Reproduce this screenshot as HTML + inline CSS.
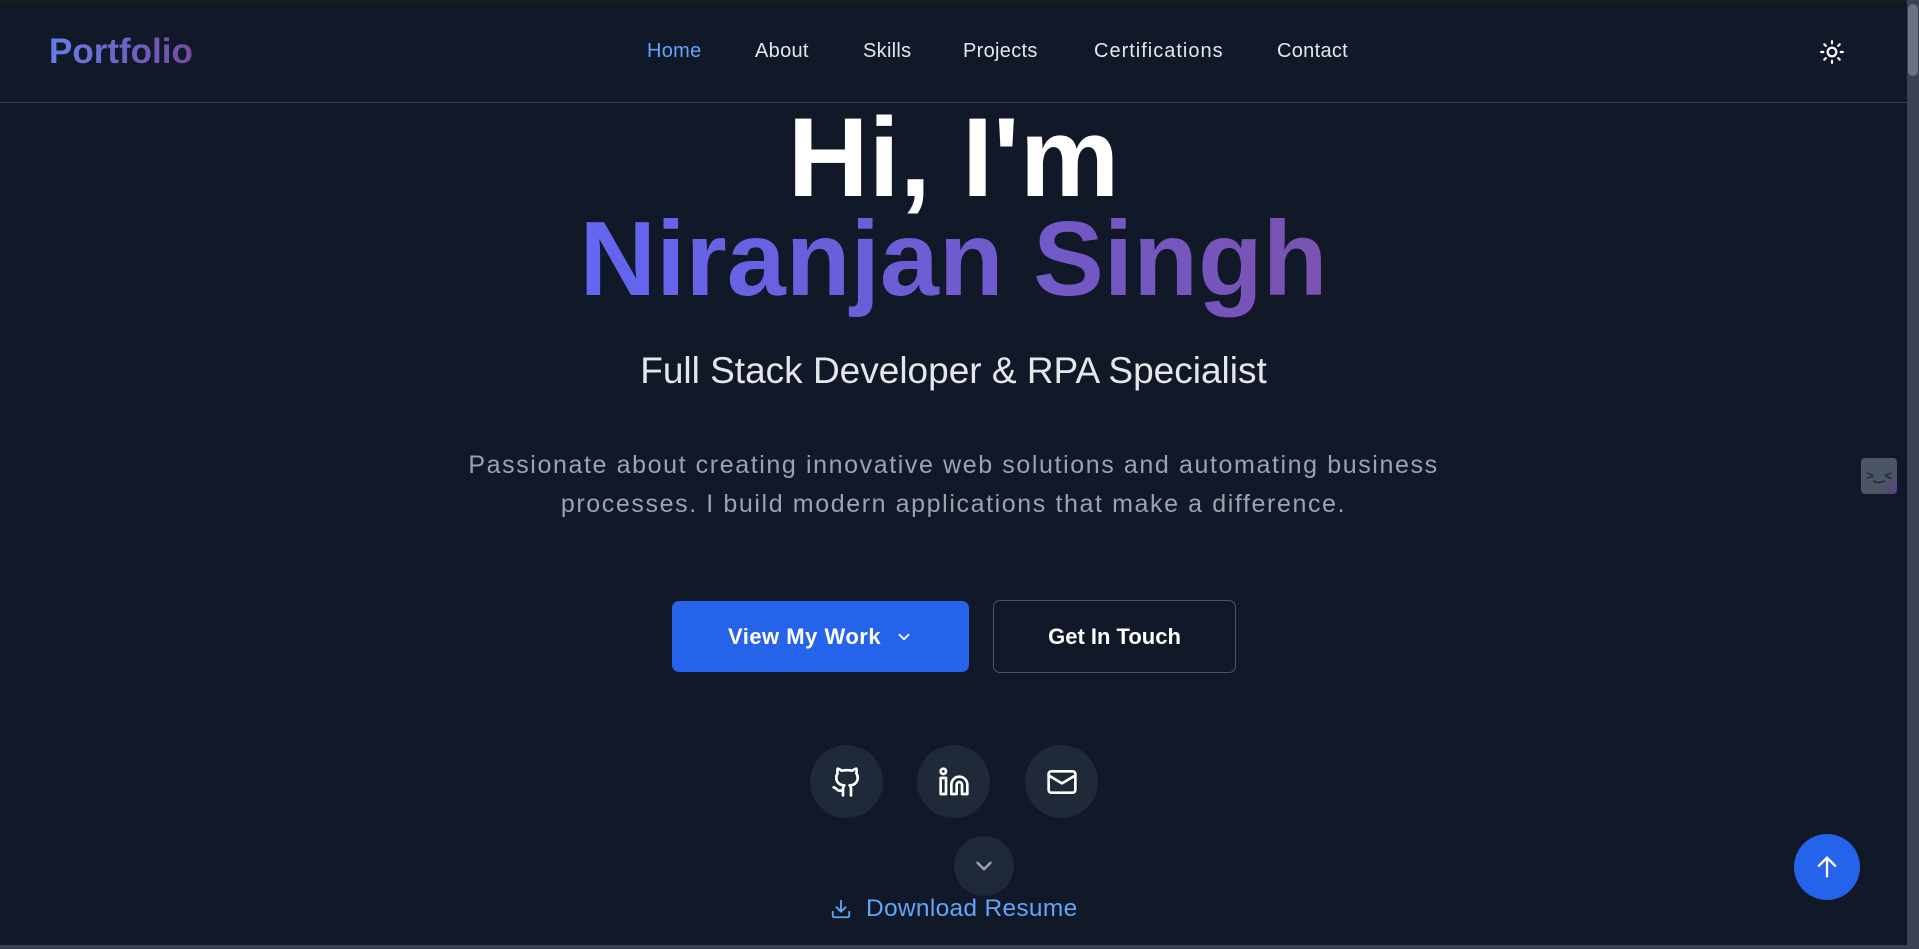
<!DOCTYPE html>
<html><head><meta charset="utf-8"><style>
*{margin:0;padding:0;box-sizing:border-box}
html,body{width:1919px;height:949px;overflow:hidden;background:#111827;font-family:"Liberation Sans",sans-serif}
.top{position:absolute;left:0;top:0;width:1919px;height:3px;background:#1c1c1e}
nav{position:absolute;left:0;top:3px;width:1907px;height:100px;border-bottom:1px solid #374151;background:#111827}
.logo{position:absolute;left:49px;top:29px;font-size:35px;font-weight:700;background:linear-gradient(90deg,#667eea,#764ba2);-webkit-background-clip:text;color:transparent}
.links a{position:absolute;top:37px;font-size:20px;font-weight:500;color:#e5e7eb;text-decoration:none;letter-spacing:0.3px}
.scroll{position:absolute;right:0;top:0;width:12px;height:949px;background:#3b4252}
.thumb{position:absolute;right:1px;top:4px;width:10px;height:72px;background:#6b7280;border-radius:5px}
.c{position:absolute;left:0;width:1907px;text-align:center}
h1{font-weight:700;color:#fff;line-height:1}
.grad{background:linear-gradient(90deg,#6366f1,#7a52b0);-webkit-background-clip:text;color:transparent;display:inline-block}
.btn{position:absolute;border-radius:7px;font-size:22px;font-weight:600;color:#fff;display:flex;align-items:center;justify-content:center}
.circ{position:absolute;width:73px;height:73px;border-radius:50%;background:#1f2937;display:flex;align-items:center;justify-content:center}
</style></head><body>
<div class="top"></div>
<nav>
<div class="logo">Portfolio</div>
<div class="links">
<a style="left:647px;color:#60a5fa">Home</a>
<a style="left:755px">About</a>
<a style="left:863px">Skills</a>
<a style="left:963px">Projects</a>
<a style="left:1094px;letter-spacing:1px">Certifications</a>
<a style="left:1277px">Contact</a>
</div>
<svg style="position:absolute;left:1819px;top:36px" width="26" height="26" viewBox="0 0 24 24" fill="none" stroke="#fff" stroke-width="2" stroke-linecap="round"><circle cx="12" cy="12" r="4"/><path d="M12 2v2M12 20v2M4.9 4.9l1.4 1.4M17.7 17.7l1.4 1.4M2 12h2M20 12h2M6.3 17.7l-1.4 1.4M19.1 4.9l-1.4 1.4"/></svg>
</nav>
<div class="c" style="top:102px"><h1 style="font-size:112px">Hi, I'm</h1></div>
<div class="c" style="top:206px"><h1 style="font-size:106px"><span class="grad" style="padding-bottom:12px">Niranjan Singh</span></h1></div>
<div class="c" style="top:350px;font-size:37px;color:#e5e7eb">Full Stack Developer &amp; RPA Specialist</div>
<div class="c" style="top:446px;font-size:25px;letter-spacing:1.6px;line-height:39px;color:#9ca3af">Passionate about creating innovative web solutions and automating business<br>processes. I build modern applications that make a difference.</div>
<div class="btn" style="left:672px;top:601px;width:297px;height:71px;background:#2563eb;letter-spacing:0.5px">View My Work <svg style="margin-left:14px" width="18" height="18" viewBox="0 0 24 24" fill="none" stroke="#fff" stroke-width="2.5" stroke-linecap="round" stroke-linejoin="round"><path d="M6 9l6 6 6-6"/></svg></div>
<div class="btn" style="left:993px;top:600px;width:243px;height:73px;border:1px solid #4b5563">Get In Touch</div>
<div class="circ" style="left:810px;top:745px"><svg width="32" height="32" viewBox="0 0 24 24" fill="none" stroke="#fff" stroke-width="2" stroke-linecap="round" stroke-linejoin="round"><path d="M15 22v-4a4.8 4.8 0 0 0-1-3.5c3 0 6-2 6-5.5.08-1.25-.27-2.48-1-3.5.28-1.150.28-2.35 0-3.5 0 0-1 0-3 1.5-2.64-.5-5.36-.5-8 0C6 2 5 2 5 2c-.3 1.15-.3 2.35 0 3.5A5.4 5.4 0 0 0 4 9c0 3.5 3 5.5 6 5.5-.39.49-.68 1.05-.85 1.65-.17.6-.22 1.23-.15 1.85v4"/><path d="M9 18c-4.51 2-5-2-7-2"/></svg></div>
<div class="circ" style="left:917px;top:745px"><svg width="32" height="32" viewBox="0 0 24 24" fill="none" stroke="#fff" stroke-width="2" stroke-linecap="round" stroke-linejoin="round"><path d="M16 8a6 6 0 0 1 6 6v7h-4v-7a2 2 0 0 0-4 0v7h-4v-7a6 6 0 0 1 6-6z"/><rect x="2" y="9" width="4" height="12"/><circle cx="4" cy="4" r="2"/></svg></div>
<div class="circ" style="left:1025px;top:745px"><svg width="32" height="32" viewBox="0 0 24 24" fill="none" stroke="#fff" stroke-width="2" stroke-linecap="round" stroke-linejoin="round"><rect x="2" y="4" width="20" height="16" rx="2"/><path d="M22 7l-10 6L2 7"/></svg></div>
<div class="circ" style="left:954px;top:836px;width:60px;height:60px;background:#1f2937"><svg width="26" height="26" viewBox="0 0 24 24" fill="none" stroke="#9ca3af" stroke-width="2.2" stroke-linecap="round" stroke-linejoin="round"><path d="M6 9l6 6 6-6"/></svg></div>
<svg style="position:absolute;left:830px;top:898px" width="22" height="22" viewBox="0 0 24 24" fill="none" stroke="#60a5fa" stroke-width="2" stroke-linecap="round" stroke-linejoin="round"><path d="M21 15v4a2 2 0 0 1-2 2H5a2 2 0 0 1-2-2v-4"/><path d="M7 10l5 5 5-5M12 15V3"/></svg>
<div style="position:absolute;left:866px;top:895px;font-size:24.5px;color:#60a5fa;letter-spacing:0.3px">Download Resume</div>
<div style="position:absolute;left:0;top:945px;width:1907px;height:4px;background:#3a4150"></div>
<div style="position:absolute;left:1861px;top:458px;width:36px;height:36px;border-radius:4px;background:linear-gradient(135deg,#4b5563 70%,#5b3f8a);color:#1f2937;font-size:13px;font-weight:700;display:flex;align-items:center;justify-content:center">&gt;‿&lt;</div>
<div style="position:absolute;left:1794px;top:834px;width:66px;height:66px;border-radius:50%;background:#2563eb;display:flex;align-items:center;justify-content:center"><svg width="28" height="28" viewBox="0 0 24 24" fill="none" stroke="#fff" stroke-width="2" stroke-linecap="round" stroke-linejoin="round"><path d="M12 20V4M5 11l7-7 7 7"/></svg></div>
<div class="scroll"><div class="thumb"></div></div>
</body></html>
